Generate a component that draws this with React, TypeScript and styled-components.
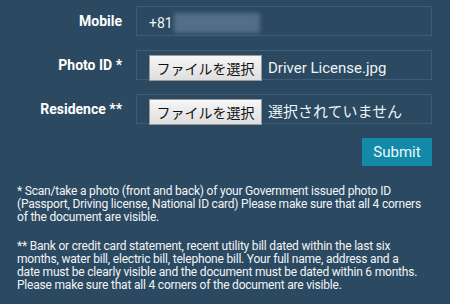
import styled, { createGlobalStyle } from 'styled-components'

const Global = createGlobalStyle`
  html, body {
    margin: 0;
    padding: 0;
    background: #2b4960;
  }
  body {
    font-family: Roboto, "Noto Sans CJK JP", sans-serif;
  }
`

const Page = styled.div`
  width: 450px;
  height: 304px;
  box-sizing: border-box;
  padding: 6px 18px 0 17px;
  background: #2b4960;
  color: #f2f5f7;
  overflow: hidden;
`
const Form = styled.div`
  display: grid;
  grid-template-columns: 105px 1fr;
  column-gap: 14px;
  row-gap: 14px;
`
const Label = styled.div`
  font-size: 14px;
  font-weight: 700;
  color: #ffffff;
  display: flex;
  align-items: center;
  justify-content: flex-end;
  height: 30px;
  white-space: nowrap;
`
const Field = styled.div`
  height: 30px;
  box-sizing: border-box;
  border: 1px solid #3c5e78;
  padding: 4px 12px 0;
  display: flex;
  align-items: flex-start;
  font-size: 14px;
  color: #eef3f6;
`
const Phone = styled.div`
  display: flex;
  align-items: center;
  height: 23px;
`
const Blurred = styled.span`
  display: inline-block;
  width: 86px;
  height: 20px;
  margin-left: 1px;
  background: #536e86;
  filter: blur(2px);
`
const FileButton = styled.button`
  height: 26px;
  width: 113px;
  flex: none;
  box-sizing: border-box;
  padding: 0;
  margin: 0;
  font: 14px "Noto Sans CJK JP", sans-serif;
  color: #111;
  background: linear-gradient(#f6f6f6, #dedede);
  border: 1px solid #9a9a9a;
  border-radius: 0;
  line-height: 24px;
`
const FileName = styled.span`
  margin-left: 6px;
  line-height: 26px;
  font-family: Roboto, "Noto Sans CJK JP", sans-serif;
  font-size: 15px;
  color: #eef3f6;
  white-space: nowrap;
`
const Actions = styled.div`
  grid-column: 2;
  display: flex;
  justify-content: flex-end;
`
const Submit = styled.button`
  width: 70px;
  height: 28px;
  border: none;
  background: #128aa8;
  color: #eef6f8;
  font: 400 15px Roboto, sans-serif;
  padding: 0;
`
const Notes = styled.div`
  margin-top: 19px;
  padding-right: 2px;
  font-size: 12px;
  line-height: 13px;
  letter-spacing: -0.2px;
  color: #f2f5f7;
  p {
    margin: 0 0 16px;
  }
`

export default function App() {
  return (
    <Page>
      <Global />
      <Form>
        <Label>Mobile</Label>
        <Field>
          <Phone>
            +81<Blurred />
          </Phone>
        </Field>
        <Label>Photo ID *</Label>
        <Field>
          <FileButton type="button">ファイルを選択</FileButton>
          <FileName>Driver License.jpg</FileName>
        </Field>
        <Label>Residence **</Label>
        <Field>
          <FileButton type="button">ファイルを選択</FileButton>
          <FileName>選択されていません</FileName>
        </Field>
        <Actions>
          <Submit type="button">Submit</Submit>
        </Actions>
      </Form>
      <Notes>
        <p>
          * Scan/take a photo (front and back) of your Government issued photo ID (Passport,
          Driving license, National ID card) Please make sure that all 4 corners of the document
          are visible.
        </p>
        <p>
          ** Bank or credit card statement, recent utility bill dated within the last six months,
          water bill, electric bill, telephone bill. Your full name, address and a
          <br />
          date must be clearly visible and the document must be dated within 6 months. Please
          make sure that all 4 corners of the document are visible.
        </p>
      </Notes>
    </Page>
  )
}
